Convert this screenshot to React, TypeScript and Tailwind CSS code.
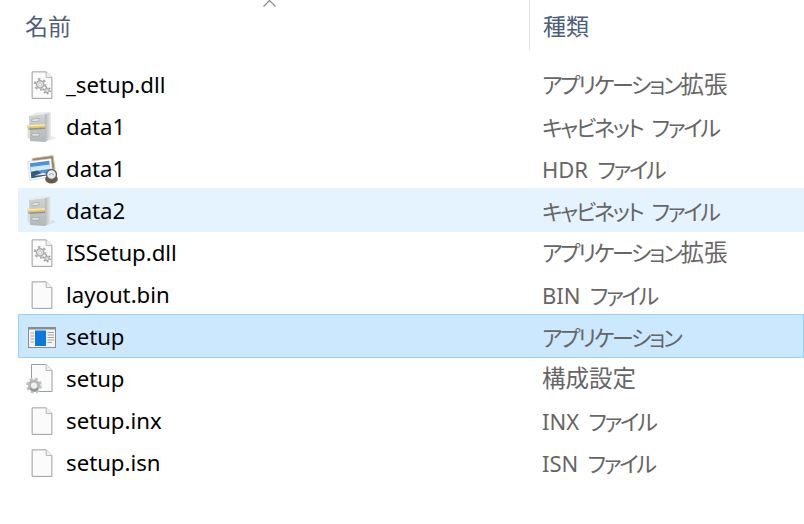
import React from "react";

const fontStack = "font-['Noto_Sans','Noto_Sans_CJK_JP',sans-serif]";

const PageShape = () => (
  <>
    <path d="M1.5 .5H20l7.500 7.500V35.500H1.500Z" fill="#fbfbfb" stroke="#9c9c9c" strokeWidth="1.300" />
    <path d="M20 .5V8h7.500" fill="#f2f2f2" stroke="#b5b5b5" strokeWidth="1.300" />
  </>
);

const Gear = ({ cx, cy, r, color }: { cx: number; cy: number; r: number; color: string }) => (
  <g>
    <circle cx={cx} cy={cy} r={r * 0.88} fill="none" stroke={color} strokeWidth={r * 0.32} strokeDasharray={`${r * 0.42} ${r * 0.5}`} />
    <circle cx={cx} cy={cy} r={r * 0.6} fill="#e9e9e9" stroke={color} strokeWidth={r * 0.22} />
    <circle cx={cx} cy={cy} r={r * 0.25} fill="#fbfbfb" stroke={color} strokeWidth={r * 0.1} />
  </g>
);

const DllIcon = () => (
  <svg width="22" height="29" viewBox="0 0 29 37">
    <PageShape />
    <Gear cx={12} cy={17} r={8} color="#aaaaaa" />
    <Gear cx={21} cy={25} r={5} color="#8f8f8f" />
  </svg>
);

const BlankIcon = () => (
  <svg width="22" height="29" viewBox="0 0 29 37">
    <PageShape />
  </svg>
);

const CabinetIcon = () => (
  <svg width="32" height="32" viewBox="0 0 32 32">
    <defs>
      <linearGradient id="cabSide" x1="0" x2="1" y1="0" y2="0">
        <stop offset="0" stopColor="#b4b8b8" />
        <stop offset="1" stopColor="#eceded" />
      </linearGradient>
      <linearGradient id="cabFront" x1="0" x2="0" y1="0" y2="1">
        <stop offset="0" stopColor="#d0d3d4" />
        <stop offset="1" stopColor="#b3b7b8" />
      </linearGradient>
    </defs>
    <path d="M5 30 19 31 31 27 26 25Z" fill="#000" opacity=".07" />
    <path d="M19 3 25 1V27l-6 4Z" fill="url(#cabSide)" />
    <path d="M3 5 19 3V31L4 30Z" fill="url(#cabFront)" />
    <path d="M3 5 19 3 25 1 10 1.500Z" fill="#e8e9ea" />
    <path d="M1 14 19 12.800V16.500L1.500 17.500Z" fill="#e8c76c" />
    <path d="M1 14.800 19 13.800" stroke="#fbeeb8" strokeWidth="1.200" />
    <path d="M2 17.500 19 16.500V18L2 19Z" fill="#8d9192" />
    <rect x="1.500" y="18.500" width="2.500" height="9" fill="#dcdede" />
    <path d="M6 8.200 13 7.400V10L6 10.700Z" fill="#e6e8e8" stroke="#8f9495" strokeWidth=".5" />
    <path d="M6 22.500 13 22.700V25.100L6 24.900Z" fill="#e6e8e8" stroke="#8f9495" strokeWidth=".5" />
  </svg>
);

const HdrIcon = () => (
  <svg width="31" height="29" viewBox="0 0 31 29">
    <path d="M5 3.500 26 .5 28 14 8 17Z" fill="#9a8060" stroke="#d2c4a8" />
    <path d="M.8 6.500 24 3.500 26 21 2.800 25.500Z" fill="#fff" stroke="#c4c4c4" strokeWidth=".6" />
    <path d="M2.800 8.300 22.300 5.800 23.800 19.500 4.400 23.200Z" fill="#4b93da" />
    <path d="M3.300 12 22.700 9.500 23.100 14 3.900 16.500Z" fill="#d3e7f4" />
    <path d="M4 17.500 10 15.500 15 18.500 23.800 19.500 4.400 23.200Z" fill="#2e5a80" />
    <path d="M7 20.800 16 17.800 21 19.500Z" fill="#f5eee0" />
    <ellipse cx="24.500" cy="24" rx="6.300" ry="4.500" fill="#6b5847" />
    <circle cx="24.500" cy="19.500" r="5" fill="#e6ebee" stroke="#6a645e" strokeWidth="1.400" />
    <path d="M22 20q2.500-3 5 0" fill="none" stroke="#9aa3a8" />
  </svg>
);

const SetupAppIcon = () => (
  <svg width="28" height="21" viewBox="0 0 28 21">
    <rect x=".5" y=".5" width="27" height="20" fill="#f4f4f4" stroke="#8c8c8c" />
    <rect x="0" y="0" width="28" height="2.500" fill="#8c8c8c" />
    <rect x="7" y="3.500" width="11" height="15.500" fill="#0a78dc" />
    <path d="M2.500 6H6M2.500 9H6M2.500 12H6M2.500 15H6M19.500 5.500H26M19.500 8H26M19.500 10.500H26M19.500 13H26M19.500 15.500H24" stroke="#a5a5a5" />
  </svg>
);

const ConfigIcon = () => (
  <svg width="27" height="30" viewBox="0 0 27 30" className="-ml-[5px]">
    <path d="M5.500 .5H20l6 6V27.500H5.500Z" fill="#fbfbfb" stroke="#9c9c9c" />
    <path d="M20 .5V6.500h6" fill="#f2f2f2" stroke="#b5b5b5" />
    <circle cx="8" cy="21.500" r="6.500" fill="none" stroke="#c2c5c7" strokeWidth="3" strokeDasharray="3 2.100" />
    <circle cx="8" cy="21.500" r="4.500" fill="#f0f1f1" stroke="#b4b7b9" strokeWidth="3" />
    <path d="M4 24.500a5 5 0 0 0 8 0" fill="none" stroke="#8e9193" strokeWidth="1.800" />
  </svg>
);

type Row = {
  name: string;
  kind: string;
  icon: React.ReactNode;
  state?: "hover" | "selected";
};

const rows: Row[] = [
  { name: "_setup.dll", kind: "アプリケーション拡張", icon: <DllIcon /> },
  { name: "data1", kind: "キャビネット ファイル", icon: <CabinetIcon /> },
  { name: "data1", kind: "HDR ファイル", icon: <HdrIcon /> },
  { name: "data2", kind: "キャビネット ファイル", icon: <CabinetIcon />, state: "hover" },
  { name: "ISSetup.dll", kind: "アプリケーション拡張", icon: <DllIcon /> },
  { name: "layout.bin", kind: "BIN ファイル", icon: <BlankIcon /> },
  { name: "setup", kind: "アプリケーション", icon: <SetupAppIcon />, state: "selected" },
  { name: "setup", kind: "構成設定", icon: <ConfigIcon /> },
  { name: "setup.inx", kind: "INX ファイル", icon: <BlankIcon /> },
  { name: "setup.isn", kind: "ISN ファイル", icon: <BlankIcon /> },
];

// kana is set narrow like Yu Gothic UI, kanji and latin keep their width
const Kind = ({ text }: { text: string }) => (
  <div className="text-[22px] text-[#666666] leading-none whitespace-pre [word-spacing:6px]">
    {text.split(/([\u4e00-\u9fff]+|[A-Z]+)/).map((part, i) => {
      if (/[\u4e00-\u9fff]/.test(part)) {
        return (
          <span key={i} className="text-[23.5px]">
            {part}
          </span>
        );
      }
      if (/[A-Z]/.test(part)) return <span key={i}>{part}</span>;
      return (
        <span key={i} className="tracking-[-2.3px] [font-feature-settings:'palt']">
          {part}
        </span>
      );
    })}
  </div>
);

const FileRow = ({ row }: { row: Row }) => {
  let tone = "h-[42px]";
  if (row.state === "hover") tone = "h-[44px] -mt-[2px] pt-[2px] bg-[#e5f3ff]";
  if (row.state === "selected") tone = "h-[44px] -mt-[2px] pt-[2px] bg-[#cce8ff] shadow-[inset_0_0_0_1px_#99d1ff]";
  return (
    <div className={`flex items-center ${tone}`}>
      <div className="w-[48px] shrink-0 flex justify-center">{row.icon}</div>
      <div className="w-[476px] shrink-0 text-[22.2px] text-black leading-none">{row.name}</div>
      <Kind text={row.kind} />
    </div>
  );
};

export default function App() {
  return (
    <div className={`relative w-[804px] h-[524px] bg-white overflow-hidden ${fontStack}`}>
      <svg width="16" height="8" viewBox="0 0 16 8" className="absolute left-[262px] top-0">
        <path d="M1.500 6.500 7.500 .5 13.500 6.500" fill="none" stroke="#8a8a8a" strokeWidth="1.200" />
      </svg>
      <div className="flex h-[64px]">
        <div className="w-[530px] h-[50px] pl-[25px] pt-[9px] text-[23px] leading-[34px] text-[#4c607a] border-r border-[#e5e5e5]">
          名前
        </div>
        <div className="pl-[13px] pt-[9px] text-[23px] leading-[34px] text-[#4c607a]">種類</div>
      </div>
      <div className="ml-[18px]">
        {rows.map((row, i) => (
          <FileRow key={i} row={row} />
        ))}
      </div>
    </div>
  );
}
